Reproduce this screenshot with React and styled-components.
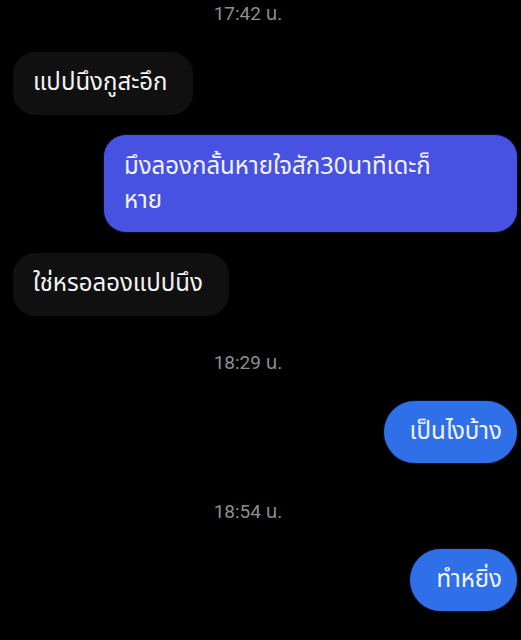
import styled, { createGlobalStyle } from "styled-components"

const GlobalStyle = createGlobalStyle`
  html, body {
    margin: 0;
    padding: 0;
    background: #000000;
  }
  body {
    font-family: "Noto Sans Thai", "Noto Sans", "DejaVu Sans", sans-serif;
    color: #ffffff;
  }
`

const messages = [
  { type: "time", text: "17:42 น.", gap: 0 },
  { type: "in", text: "แปปนึงกูสะอึก", gap: 27 },
  { type: "out", lines: ["มึงลองกลั้นหายใจสัก30นาทีเดะก็", "หาย"], tone: "indigo", gap: 20 },
  { type: "in", text: "ใช่หรอลองแปปนึง", gap: 21 },
  { type: "time", text: "18:29 น.", gap: 36 },
  { type: "out", lines: ["เป็นไงบ้าง"], tone: "blue", gap: 27 },
  { type: "time", text: "18:54 น.", gap: 38 },
  { type: "out", lines: ["ทำหยิ่ง"], tone: "blue", gap: 26 },
]

export default function App() {
  return (
    <>
      <GlobalStyle />
      <Chat>
        {messages.map((m, i) => {
          if (m.type === "time") {
            return <Stamp key={i} $gap={m.gap}>{m.text}</Stamp>
          }
          if (m.type === "in") {
            return (
              <Row key={i} $gap={m.gap}>
                <InBubble>{m.text}</InBubble>
              </Row>
            )
          }
          return (
            <Row key={i} $gap={m.gap} $out>
              <OutBubble $tone={m.tone} $multi={m.lines.length > 1}>
                {m.lines.map((l, j) => (
                  <Line key={j}>{l}</Line>
                ))}
              </OutBubble>
            </Row>
          )
        })}
      </Chat>
    </>
  )
}

const Chat = styled.div`
  width: 521px;
  height: 640px;
  overflow: hidden;
  display: flex;
  flex-direction: column;
  padding: 3px 4px 0 13px;
  box-sizing: border-box;
  background: #000000;
`

const Stamp = styled.div`
  margin-top: ${p => p.$gap}px;
  padding-right: 34px;
  text-align: center;
  font-family: Roboto, "Noto Sans Thai", "Noto Sans", sans-serif;
  font-size: 19px;
  line-height: 22px;
  color: #8e8e8e;
`

const Row = styled.div`
  margin-top: ${p => p.$gap}px;
  display: flex;
  justify-content: ${p => (p.$out ? "flex-end" : "flex-start")};
`

const InBubble = styled.div`
  background: #101010;
  border-radius: 22px;
  padding: 14px 26px 15px 20px;
  font-size: 24px;
  line-height: 34px;
  color: #f4f4f4;
`

const OutBubble = styled.div`
  background: ${p => (p.$tone === "indigo" ? "#4852e2" : "#2f6fe8")};
  border-radius: ${p => (p.$multi ? "22px" : "31px")};
  width: ${p => (p.$multi ? "413px" : "auto")};
  box-sizing: border-box;
  padding: ${p => (p.$multi ? "15px 20px 14px 20px" : "14px 15px 14px 26px")};
  font-size: 24px;
  line-height: 34px;
  color: #f2f4ff;
  box-shadow: 0 0 2px rgba(80, 110, 255, 0.5);
`

const Line = styled.div`
  white-space: nowrap;
`
